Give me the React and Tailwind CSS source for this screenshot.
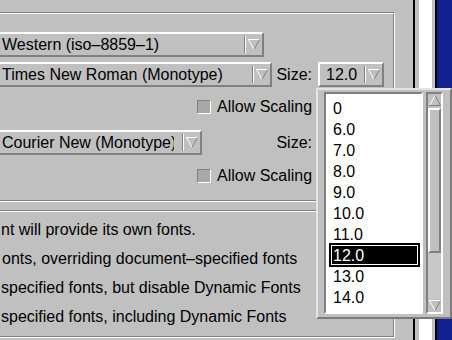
import React from "react";

const font = { fontFamily: '"Liberation Sans", Arial, Helvetica, sans-serif' };

function DownArrow() {
  return (
    <svg width="12" height="11" viewBox="0 0 12 11" className="block">
      <polygon points="0.5,0.5 11.5,0.5 6,10.5" fill="#c0c0c0" />
      <line x1="0" y1="0.5" x2="12" y2="0.5" stroke="#ffffff" />
      <line x1="0.5" y1="0.5" x2="6" y2="10.5" stroke="#ffffff" />
      <line x1="11.5" y1="0.5" x2="6" y2="10.5" stroke="#808080" />
    </svg>
  );
}

function UpArrow() {
  return (
    <svg width="12" height="11" viewBox="0 0 12 11" className="block">
      <polygon points="6,0.5 11.5,10.5 0.5,10.5" fill="#c0c0c0" />
      <line x1="6" y1="0.5" x2="0.5" y2="10.5" stroke="#ffffff" />
      <line x1="6" y1="0.5" x2="11.5" y2="10.5" stroke="#808080" />
      <line x1="0" y1="10.5" x2="12" y2="10.5" stroke="#808080" />
    </svg>
  );
}

function Combo({ className, textClass, text }) {
  return (
    <div
      className={`flex h-[25px] shrink-0 border-t-2 border-r-2 border-b-2 border-t-white border-r-[#808080] border-b-[#808080] ${className}`}
    >
      <div className={`flex-1 min-w-0 flex items-center overflow-hidden whitespace-nowrap ${textClass}`}>
        {text}
      </div>
      <div className="self-center h-[17px] w-[2px] border-l border-l-[#808080] border-r border-r-white" />
      <div className="w-[16px] flex items-center justify-center">
        <DownArrow />
      </div>
    </div>
  );
}

function Check() {
  return (
    <div className="w-[14px] h-[14px] shrink-0 border border-t-[#808080] border-l-[#808080] border-b-white border-r-white bg-[#a8a8a8]" />
  );
}

const sizes = ["0", "6.0", "7.0", "8.0", "9.0", "10.0", "11.0", "12.0", "13.0", "14.0"];

export default function App() {
  return (
    <div
      className="relative w-[452px] h-[340px] overflow-hidden bg-[#c0c0c0] text-black text-[16px] flex"
      style={font}
    >
      <div className="w-[413px] shrink-0 flex flex-col">
        {/* Group 1 */}
        <div className="mt-[12px] ml-[-10px] w-[405px] h-[190px] shrink-0 border-t border-r border-b border-t-[#808080] border-r-white border-b-white">
          <div className="h-full border-t border-r border-b border-t-white border-r-[#808080] border-b-[#808080] flex flex-col">
            <Combo className="mt-[18px] w-[274px]" textClass="pl-[12px]" text="Western (iso–8859–1)" />
            <div className="mt-[5px] flex items-center">
              <Combo className="w-[282px]" textClass="pl-[12px]" text="Times New Roman (Monotype)" />
              <div className="w-[46px] pr-[6px] text-right leading-[25px]">Size:</div>
              <Combo
                className="w-[66px] border-l-2 border-l-white"
                textClass="pl-[6px]"
                text="12.0"
              />
            </div>
            <div className="mt-[11px] h-[18px] ml-[207px] flex items-center gap-[6px]">
              <Check />
              <span className="whitespace-nowrap">Allow Scaling</span>
            </div>
            <div className="mt-[14px] flex items-center">
              <Combo className="w-[212px]" textClass="pl-[12px] mr-[8px]" text="Courier New (Monotype)" />
              <div className="w-[116px] pr-[6px] text-right leading-[25px]">Size:</div>
            </div>
            <div className="mt-[12px] h-[18px] ml-[207px] flex items-center gap-[6px]">
              <Check />
              <span className="whitespace-nowrap">Allow Scaling</span>
            </div>
          </div>
        </div>

        {/* Group 2 */}
        <div className="mt-[8px] ml-[-10px] w-[405px] h-[128px] shrink-0 border-t border-r border-b border-t-[#808080] border-r-white border-b-white">
          <div className="h-full border-t border-r border-b border-t-white border-r-[#808080] border-b-[#808080] flex flex-col pt-[3px] pl-[11px] whitespace-nowrap">
            <div className="h-[29px] leading-[29px]">nt will provide its own fonts.</div>
            <div className="h-[29px] leading-[29px] pl-[1px]">onts, overriding document–specified fonts</div>
            <div className="h-[29px] leading-[29px]">specified fonts, but disable Dynamic Fonts</div>
            <div className="h-[29px] leading-[29px]">specified fonts, including Dynamic Fonts</div>
          </div>
        </div>
      </div>

      {/* right strip */}
      <div className="w-[2px] shrink-0 bg-black" />
      <div className="w-[4px] shrink-0 bg-[#c0c0c0]" />
      <div className="w-[13px] shrink-0 bg-white" />
      <div className="w-[3px] shrink-0 bg-[#c0c0c0]" />
      <div className="w-[2px] shrink-0 bg-black" />
      <div className="flex-1 bg-[#12208f]" />

      {/* popup list */}
      <div className="absolute left-[316px] top-[88px] w-[136px] h-[231px] border-2 border-t-[#e4e4e4] border-l-[#e4e4e4] border-b-[#7a7a7a] border-r-[#7a7a7a] bg-[#c0c0c0] flex pl-[6px] pt-[2px] pb-[3px]">
        <div className="w-[99px] shrink-0 border-2 border-t-[#808080] border-l-[#808080] border-b-white border-r-white bg-white pt-[4px] overflow-hidden">
          {sizes.map((s) =>
            s === "12.0" ? (
              <div key={s} className="relative h-[21px] leading-[21px] pl-[7px] text-white">
                <div className="absolute left-[3px] right-[1px] top-[-2px] bottom-[-1px] bg-black">
                  <div className="absolute inset-[2px] border border-white" />
                </div>
                <span className="relative">{s}</span>
              </div>
            ) : (
              <div key={s} className="h-[21px] leading-[21px] pl-[7px]">
                {s}
              </div>
            )
          )}
        </div>
        <div className="ml-[3px] w-[17px] shrink-0 border-2 border-t-[#808080] border-l-[#808080] border-b-white border-r-white flex flex-col">
          <div className="h-[13px] flex items-center justify-center">
            <UpArrow />
          </div>
          <div className="mt-[1px] h-[145px] border-2 border-t-white border-l-white border-b-[#808080] border-r-[#808080]" />
          <div className="flex-1 bg-[#c8c8c8]" />
          <div className="h-[13px] flex items-center justify-center">
            <DownArrow />
          </div>
        </div>
      </div>
    </div>
  );
}
